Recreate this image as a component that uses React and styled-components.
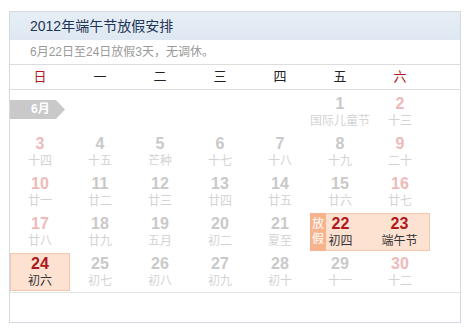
import React from "react";
import styled, { createGlobalStyle } from "styled-components";

const GlobalStyle = createGlobalStyle`
  body {
    margin: 0;
    background: #ffffff;
    font-family: "Liberation Sans", "Noto Sans CJK SC", sans-serif;
  }
`;

const Page = styled.div`
  padding: 11px 0 0 9px;
`;

const Box = styled.div`
  width: 450px;
  height: 310px;
  border: 1px solid #d3dae3;
`;

const Title = styled.div`
  height: 28px;
  line-height: 28px;
  padding-left: 20px;
  font-size: 14px;
  color: #1d3557;
  background: linear-gradient(to bottom, #e6edf5, #dfe8f2);
`;

const Subtitle = styled.div`
  height: 24px;
  line-height: 24px;
  padding-left: 20px;
  font-size: 12px;
  color: #9a9a9a;
  border-bottom: 1px solid #dddddd;
`;

const Weekdays = styled.div`
  display: grid;
  grid-template-columns: repeat(7, 60px);
  height: 24px;
  border-bottom: 1px solid #dddddd;
`;

const Weekday = styled.div`
  text-align: center;
  line-height: 24px;
  font-size: 13px;
  color: ${(p) => (p.$weekend ? "#b0181b" : "#222222")};
`;

const Grid = styled.div`
  position: relative;
  display: grid;
  grid-template-columns: repeat(7, 60px);
  grid-auto-rows: 38px;
  row-gap: 2px;
  padding: 3px 0 1px;
  border-bottom: 1px solid #e3e3e3;
`;

const MonthTag = styled.div`
  position: absolute;
  left: 0;
  top: 10px;
  width: 55px;
  height: 19px;
  line-height: 19px;
  padding-left: 21px;
  box-sizing: border-box;
  background: #c9c9c9;
  color: #ffffff;
  font-size: 12px;
  font-weight: bold;
  clip-path: polygon(0 0, 46px 0, 55px 50%, 46px 100%, 0 100%);
`;

const Cell = styled.div`
  position: relative;
  text-align: center;
  box-sizing: border-box;
  background: ${(p) => (p.$holiday ? "#fde2d2" : "transparent")};
  border: ${(p) => (p.$holiday ? "1px solid #f6c6a8" : "none")};
  border-left-width: ${(p) => (p.$joinLeft ? "0" : "1px")};
  border-right-width: ${(p) => (p.$joinRight ? "0" : "1px")};
  padding-top: ${(p) => (p.$holiday ? "1px" : "2px")};
`;

const Num = styled.div`
  font-size: 16px;
  font-weight: bold;
  line-height: 18px;
  color: ${(p) =>
    p.$holiday ? "#b0181b" : p.$weekend ? "#eebaba" : "#c9c9c9"};
`;

const Lunar = styled.div`
  font-size: 12px;
  line-height: 17px;
  color: ${(p) => (p.$holiday ? "#333333" : "#d3d3d3")};
`;

const RestTag = styled.div`
  position: absolute;
  left: -1px;
  top: -1px;
  bottom: -1px;
  width: 16px;
  display: flex;
  flex-direction: column;
  justify-content: center;
  background: #f7b38c;
  color: #ffffff;
  font-size: 12px;
  line-height: 15px;
`;

const lunar = {
  1: "国际儿童节", 2: "十三", 3: "十四", 4: "十五", 5: "芒种", 6: "十七",
  7: "十八", 8: "十九", 9: "二十", 10: "廿一", 11: "廿二", 12: "廿三",
  13: "廿四", 14: "廿五", 15: "廿六", 16: "廿七", 17: "廿八", 18: "廿九",
  19: "五月", 20: "初二", 21: "夏至", 22: "初四", 23: "端午节", 24: "初六",
  25: "初七", 26: "初八", 27: "初九", 28: "初十", 29: "十一", 30: "十二",
};

const holidays = [22, 23, 24];

const Day = ({ day }) => {
  const col = (day + 4) % 7;
  const weekend = col === 0 || col === 6;
  const holiday = holidays.includes(day);
  return (
    <Cell
      $holiday={holiday}
      $joinRight={day === 22}
      $joinLeft={day === 23}
    >
      {day === 22 && (
        <RestTag>
          <span>放</span>
          <span>假</span>
        </RestTag>
      )}
      <Num $holiday={holiday} $weekend={weekend}>{day}</Num>
      <Lunar $holiday={holiday}>{lunar[day]}</Lunar>
    </Cell>
  );
};

const weekdays = ["日", "一", "二", "三", "四", "五", "六"];

export default function App() {
  const days = Array.from({ length: 30 }, (_, i) => i + 1);
  return (
    <Page>
      <GlobalStyle />
      <Box>
        <Title>2012年端午节放假安排</Title>
        <Subtitle>6月22日至24日放假3天，无调休。</Subtitle>
        <Weekdays>
          {weekdays.map((w, i) => (
            <Weekday key={w} $weekend={i === 0 || i === 6}>{w}</Weekday>
          ))}
        </Weekdays>
        <Grid>
          <MonthTag>6月</MonthTag>
          {Array.from({ length: 5 }, (_, i) => (
            <div key={`e${i}`} />
          ))}
          {days.map((d) => (
            <Day key={d} day={d} />
          ))}
        </Grid>
      </Box>
    </Page>
  );
}
